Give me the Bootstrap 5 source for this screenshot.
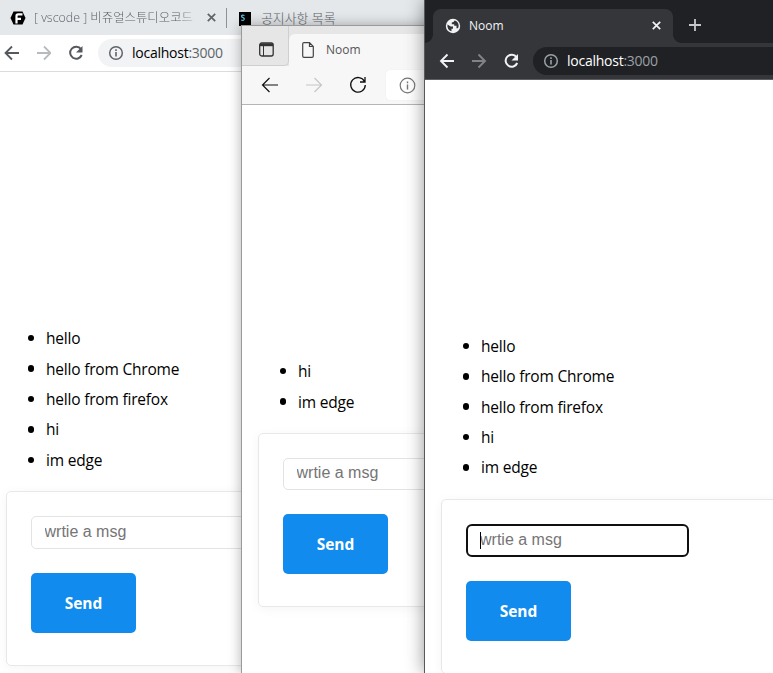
<!DOCTYPE html>
<html lang="ko">
<head>
<meta charset="utf-8">
<meta name="viewport" content="width=device-width, initial-scale=1">
<title>Noom</title>
<link href="https://cdn.jsdelivr.net/npm/bootstrap@5.3.0/dist/css/bootstrap.min.css" rel="stylesheet">
<style>
body{width:773px;height:673px;font-family:"Open Sans","Noto Sans CJK KR",sans-serif;color:#000}
svg{display:block;flex:none}
.win{position:absolute;bottom:0;right:0;overflow:visible}
.win-a{left:0;top:0}
.win-b{left:241px;top:25px;border:solid #9a9a9a;border-width:1px 0 0 1px;box-shadow:0 0 12px rgba(0,0,0,.3)}
.win-c{left:424px;top:0;border-left:1px solid #58595b;box-shadow:0 0 17px rgba(0,0,0,.42)}
.ui{font-size:12px;line-height:16px;white-space:nowrap}
.url{font-size:14px;line-height:18px;white-space:nowrap;letter-spacing:-.25px}
.strip-a{height:35px;background:#e5e8eb;color:#5f6368;padding-left:10px}
.bar-a{height:37px;border-bottom:1px solid #dadce0;padding-left:3px}
.bar-a .pill{background:#f1f3f4;height:28px;margin-left:14px;padding-left:10px}
.fade-title{width:165px;font-size:12.4px;font-weight:300;-webkit-mask-image:linear-gradient(90deg,#000 145px,transparent 167px);mask-image:linear-gradient(90deg,#000 145px,transparent 167px)}
.tab-name{font-size:12.9px;font-weight:300}
.tab-line{width:1px;height:20px;background:#8d9195;margin-left:10px}
.strip-b{height:40px;background:#e6e6e6}
.menu-b{width:47px;border-right:1px solid #cfcfcf;border-bottom:1px solid #cfcfcf;border-radius:0 0 5px 0;padding-left:17px}
.tab-b{background:#f7f7f7;border-radius:6px 0 0 0;margin-top:8px;padding-left:13px;color:#555}
.bar-b{height:39px;background:#f7f7f7;border-bottom:1px solid #b5b5b5;padding-left:19px}
.bar-b .fwd{margin-left:26px}
.bar-b .pill{height:30px;background:#fff;border-radius:4px 0 0 4px;margin-left:19px;padding-left:13px;box-shadow:0 0 1px #ddd}
.strip-c{height:43px;background:#202124;padding-left:8px}
.tab-c{width:240px;height:34px;background:#35363a;border-radius:8px 8px 0 0;color:#f1f3f4;padding:0 8px 0 12px}
.foot{width:8px;height:8px}
.foot-l{background:radial-gradient(circle at 0 0,#202124 7.5px,#35363a 8px);margin-left:-8px}
.foot-r{background:radial-gradient(circle at 100% 0,#202124 7.5px,#35363a 8px)}
.bar-c{height:37px;background:#35363a;border-bottom:1px solid #5c5d60;padding-left:14px}
.bar-c .pill{background:#202124;height:28px;margin-left:13px;padding-left:10px;color:#fff}
.pill-round{border-radius:14px 0 0 14px}
.win-c .dim{color:#9aa0a6}
.win-a .dim{color:#5f6368}
.page{overflow:hidden}
.msgs{font-size:15.5px;letter-spacing:-.2px}
.msgs li{height:30.4px;line-height:30px}
.msgs li::before{content:"";width:6.5px;height:6.5px;border-radius:50%;background:#000;margin-right:12px}
.page-a{padding:251px 0 0 6px}
.page-b,.page-c{padding:251px 0 0 16px}
.page .msgs{padding-left:21.5px;margin-bottom:16.500px}
.panel{width:460px;height:175px;border:1px solid #e8e8e8;border-radius:5px;box-shadow:0 2px 12px rgba(0,0,0,.045);padding:24px}
.field{width:223px;height:33px;border:1px solid #e3e3e3;border-radius:5px;padding:0 0 2px 12.5px;font:16px "Liberation Sans",Arial,sans-serif;outline:0}
.field::placeholder{color:#757575;opacity:1}
.field-on{border:2px solid #101010;border-radius:6px;padding-left:12px}
.caret{position:absolute;left:14px;top:8px;width:1px;height:17px;background:#000}
.send{width:105px;height:60px;margin-top:24px;border:0;border-radius:5px;background:#118bee!important;font-size:15.5px;font-weight:700;letter-spacing:-.05px;padding:0;color:#fff}
.win-b .panel{height:174px}
.win-b .field{height:32px}
</style>
<script src="https://cdn.jsdelivr.net/npm/bootstrap@5.3.0/dist/js/bootstrap.bundle.min.js"></script>
</head>
<body class="position-relative overflow-hidden m-0 bg-white">

<section class="win win-a bg-white d-flex flex-column">
  <div class="strip-a ui d-flex align-items-center">
    <svg width="16" height="16" viewBox="0 0 16 16"><path d="M3.500 1.500h9L15.500 8l-3 6.500h-9L.5 8z" fill="#000"/><path d="M6.500 13.500V6Q6.500 4.300 8 4.300h4.500M6.500 8.800H11" fill="none" stroke="#fff" stroke-width="2.200"/></svg>
    <span class="fade-title ms-2">[ vscode ] 비쥬얼스튜디오코드</span>
    <svg class="ms-2" width="9" height="9" viewBox="0 0 9 9" stroke="#5f6368" stroke-width="1.700"><path d="M.8.8l7.400 7.400M8.200.8L.8 8.200"/></svg>
    <i class="tab-line me-2"></i>
    <svg class="ms-1 mt-1" width="14" height="16" viewBox="0 0 14 16"><path d="M0 0h12v13l2 3-4-2H0z" fill="#000"/><path d="M5.500 3.500Q3 2.500 2.500 4q0 1.300 1.600 1.600 1.500.5 1 1.900-.8 1.400-3 .5" fill="none" stroke="#55bfe8" stroke-width="1.300"/></svg>
    <span class="tab-name ms-2 ps-0">공지사항 목록</span>
  </div>
  <div class="bar-a d-flex align-items-center">
    <svg width="16" height="16" viewBox="0 0 16 16" fill="none" stroke="#55595e" stroke-width="1.800"><path d="M16 8H3M9 1.500L2.500 8 9 14.500"/></svg>
    <svg class="ms-3" width="16" height="16" viewBox="0 0 16 16" fill="none" stroke="#b8babd" stroke-width="1.800"><path d="M2 8h13M9 1.500L15.500 8 9 14.500"/></svg>
    <svg class="ms-3" width="17" height="16" viewBox="0 0 17 16"><path d="M14 4.200A6 6 0 1 0 14.700 10" fill="none" stroke="#55595e" stroke-width="2"/><path d="M15.500 1v6.500H9z" fill="#55595e"/></svg>
    <div class="pill pill-round flex-grow-1 d-flex align-items-center">
      <svg width="16" height="16" viewBox="0 0 16 16"><circle cx="8" cy="8" r="6.300" fill="none" stroke="#5f6368" stroke-width="1.500"/><path d="M8 7v4.500M8 4.300V6" stroke="#5f6368" stroke-width="1.600"/></svg>
      <span class="url ms-2">localhost<span class="dim">:3000</span></span>
    </div>
  </div>
  <div class="page page-a flex-grow-1">
    <ul class="msgs list-unstyled">
      <li class="d-flex align-items-center">hello</li><li class="d-flex align-items-center">hello from Chrome</li><li class="d-flex align-items-center">hello from firefox</li><li class="d-flex align-items-center">hi</li><li class="d-flex align-items-center">im edge</li>
    </ul>
    <form class="panel"><input class="field d-block" placeholder="wrtie a msg"><button type="button" class="btn btn-primary send">Send</button></form>
  </div>
</section>

<section class="win win-b bg-white d-flex flex-column">
  <div class="strip-b ui d-flex">
    <div class="menu-b d-flex align-items-center pt-2"><svg width="15" height="15" viewBox="0 0 15 15" fill="none" stroke="#333"><rect x=".7" y="1" width="13.500" height="13" rx="2" stroke-width="1.300"/><path d="M1 2.800h13" stroke-width="2.800"/><path d="M4.500 4v10"/></svg></div>
    <div class="tab-b flex-grow-1 d-flex align-items-center">
      <svg width="12" height="16" viewBox="0 0 12 16" fill="none" stroke="#444" stroke-width="1.200"><path d="M7.500.7H2Q.7.700.7 2v12q0 1.300 1.300 1.300h8q1.300 0 1.300-1.300V4.500zV4.500h3.800"/></svg>
      <span class="ms-2 ps-1">Noom</span>
    </div>
  </div>
  <div class="bar-b d-flex align-items-center">
    <svg width="18" height="16" viewBox="0 0 18 16" fill="none" stroke="#111" stroke-width="1.200"><path d="M17 8H1.500M8.500 1l-7 7 7 7"/></svg>
    <svg class="fwd me-1" width="18" height="16" viewBox="0 0 18 16" fill="none" stroke="#c6c6c6" stroke-width="1.200"><path d="M1 8h15.500M9.500 1l7 7-7 7"/></svg>
    <svg class="ms-3 ps-1" width="24" height="18" viewBox="-2 0 20 18" fill="none" stroke="#111" stroke-width="1.300"><path d="M15.500 5.500A7.300 7.300 0 1 0 16.300 9M16 1v5h-5"/></svg>
    <div class="pill flex-grow-1 d-flex align-items-center"><svg width="17" height="17" viewBox="0 0 17 17"><circle cx="8.500" cy="8.500" r="7.300" fill="none" stroke="#777" stroke-width="1.200"/><path d="M8.500 7.500v5M8.500 4.500v1.700" stroke="#777" stroke-width="1.400"/></svg></div>
  </div>
  <div class="page page-b flex-grow-1">
    <ul class="msgs list-unstyled"><li class="d-flex align-items-center">hi</li><li class="d-flex align-items-center">im edge</li></ul>
    <form class="panel"><input class="field d-block" placeholder="wrtie a msg"><button type="button" class="btn btn-primary send">Send</button></form>
  </div>
</section>

<section class="win win-c bg-white d-flex flex-column">
  <div class="strip-c ui d-flex align-items-end">
    <i class="foot foot-l"></i>
    <div class="tab-c d-flex align-items-center">
      <svg width="16" height="16" viewBox="0 0 16 16"><circle cx="8" cy="8" r="7.200" fill="#f1f3f4"/><path d="M2.400 6.500L5.800 8.500H8v2.200H6.500v2.600Q2 12 2.400 6.500zM9.500 2.500Q9 4.500 6.800 4.500v1.800h2.400v1.500h2.300v2.500h1.500Q14.500 7 12.500 4.200 11.300 2.900 9.500 2.500z" fill="#35363a"/></svg>
      <span class="ms-2">Noom</span>
      <svg class="ms-auto me-1" width="9" height="9" viewBox="0 0 9 9" stroke="#f1f3f4" stroke-width="1.700"><path d="M.8.8l7.400 7.400M8.200.8L.8 8.200"/></svg>
    </div>
    <i class="foot foot-r"></i>
    <svg class="align-self-center ms-2 mt-2" width="12" height="12" viewBox="0 0 12 12" stroke="#c5c7c9" stroke-width="1.800"><path d="M6 0v12M0 6h12"/></svg>
  </div>
  <div class="bar-c d-flex align-items-center">
    <svg width="16" height="16" viewBox="0 0 16 16" fill="none" stroke="#f1f3f4" stroke-width="1.900"><path d="M15 8H2.500M8.500 1.500L2 8l6.500 6.500"/></svg>
    <svg class="ms-3" width="16" height="16" viewBox="0 0 16 16" fill="none" stroke="#828387" stroke-width="1.900"><path d="M1 8h12.500M7.500 1.500L14 8l-6.500 6.500"/></svg>
    <svg class="ms-3" width="17" height="16" viewBox="0 0 17 16"><path d="M13.500 4.200A6 6 0 1 0 14.200 10" fill="none" stroke="#f1f3f4" stroke-width="2"/><path d="M15 1v6.500H8.500z" fill="#f1f3f4"/></svg>
    <div class="pill pill-round flex-grow-1 d-flex align-items-center">
      <svg width="16" height="16" viewBox="0 0 16 16"><circle cx="8" cy="8" r="6.300" fill="none" stroke="#9aa0a6" stroke-width="1.500"/><path d="M8 7v4.500M8 4.300V6" stroke="#9aa0a6" stroke-width="1.600"/></svg>
      <span class="url ms-2">localhost<span class="dim">:3000</span></span>
    </div>
  </div>
  <div class="page page-c flex-grow-1">
    <ul class="msgs list-unstyled">
      <li class="d-flex align-items-center">hello</li><li class="d-flex align-items-center">hello from Chrome</li><li class="d-flex align-items-center">hello from firefox</li><li class="d-flex align-items-center">hi</li><li class="d-flex align-items-center">im edge</li>
    </ul>
    <form class="panel"><div class="position-relative"><input class="field field-on d-block" placeholder="wrtie a msg"><i class="caret"></i></div><button type="button" class="btn btn-primary send">Send</button></form>
  </div>
</section>
</body>
</html>
